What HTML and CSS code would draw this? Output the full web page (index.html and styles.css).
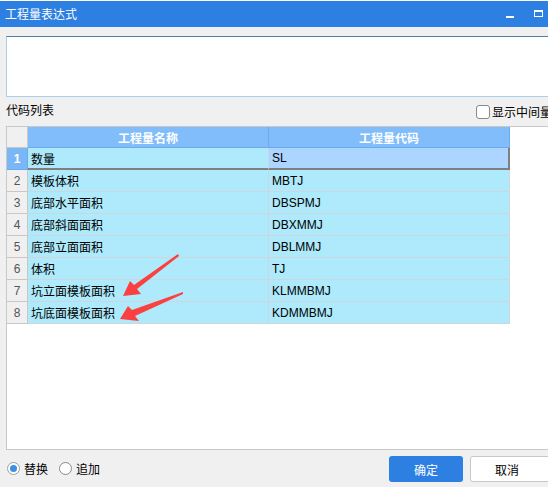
FILE: index.html
```html
<!DOCTYPE html>
<html lang="zh">
<head>
<meta charset="utf-8">
<title>工程量表达式</title>
<link rel="stylesheet" href="styles.css">
</head>
<body>
<div class="page">
  <div class="topstrip"></div>
  <div class="titlebar">
    <span class="title">工程量表达式</span>
    <span class="winbtns"><span class="min"></span><span class="max"></span></span>
  </div>
  <div class="content">
    <div class="expr"></div>
    <div class="listhead">
      <span class="label">代码列表</span>
      <span class="chk"><span class="box"></span>显示中间量</span>
    </div>
    <div class="gridwrap">
      <div class="grid">
        <div class="c hn"></div><div class="c hd">工程量名称</div><div class="c hd">工程量代码</div>
        <div class="c n sel">1</div><div class="c d r1">数量</div><div class="c d r1 cur">SL</div>
        <div class="c n">2</div><div class="c d">模板体积</div><div class="c d">MBTJ</div>
        <div class="c n">3</div><div class="c d">底部水平面积</div><div class="c d">DBSPMJ</div>
        <div class="c n">4</div><div class="c d">底部斜面面积</div><div class="c d">DBXMMJ</div>
        <div class="c n">5</div><div class="c d">底部立面面积</div><div class="c d">DBLMMJ</div>
        <div class="c n">6</div><div class="c d">体积</div><div class="c d">TJ</div>
        <div class="c n">7</div><div class="c d">坑立面模板面积</div><div class="c d">KLMMBMJ</div>
        <div class="c n">8</div><div class="c d">坑底面模板面积</div><div class="c d">KDMMBMJ</div>
      </div>
    </div>
    <div class="footer">
      <span class="radio on"><span class="dot"></span></span><span class="rtext">替换</span>
      <span class="radio"></span><span class="rtext">追加</span>
      <span class="btns">
        <span class="btn primary">确定</span>
        <span class="btn cancel">取消</span>
      </span>
    </div>
  </div>
  <svg class="arrows" width="548" height="487" viewBox="0 0 548 487">
    <polygon points="123,296 130,281 134,285 178,254 179,256 137,289 141,294" fill="#fb4040"/>
    <polygon points="120,319 128,306 132,310 183,292 183,294 135,316 139,321" fill="#fb4040"/>
  </svg>
</div>
</body>
</html>
```
FILE: styles.css
```css
html, body {
  margin: 0;
  padding: 0;
  overflow: hidden;
  background: #f0f0f0;
}
body {
  font-family: "Liberation Sans", "Noto Sans CJK SC", sans-serif;
  font-size: 12px;
  color: #000;
}
.page {
  position: relative;
  width: 548px;
  height: 487px;
  overflow: hidden;
}
.topstrip {
  height: 1px;
  background: #ffffff;
}
.titlebar {
  height: 26px;
  background: #2d80e1;
  display: flex;
  align-items: center;
  padding-left: 5px;
  color: #fff;
  width: 548px;
  box-sizing: border-box;
}
.title {
  font-size: 12px;
  line-height: 26px;
  margin-top: 1px;
}
.winbtns {
  margin-left: auto;
  display: flex;
  align-items: center;
  height: 26px;
}
.min {
  width: 8px;
  height: 2px;
  background: #fff;
  margin-top: 5px;
  margin-right: 20px;
}
.max {
  width: 9px;
  height: 7px;
  box-sizing: border-box;
  border: 1px solid #fff;
  border-top-width: 2px;
  margin-top: -2px;
  margin-right: 5px;
}
.content {
  width: 548px;
  padding-left: 6px;
}
.expr {
  margin-top: 9px;
  height: 61px;
  box-sizing: border-box;
  background: #fff;
  border: 1px solid #a9d0ec;
  border-top-color: #4f7fab;
  border-right: none;
}
.listhead {
  height: 29px;
  display: flex;
  align-items: center;
}
.label {
  line-height: 29px;
}
.chk {
  margin-left: auto;
  width: 78px;
  white-space: nowrap;
  display: flex;
  align-items: center;
  gap: 2px;
}
.box {
  width: 14px;
  height: 14px;
  box-sizing: border-box;
  border: 1px solid #8a8a8a;
  border-radius: 3px;
  background: #fff;
}
.gridwrap {
  height: 324px;
  box-sizing: border-box;
  border: 1px solid #c8c8c8;
  border-right: none;
  background: #fff;
}
.grid {
  display: grid;
  grid-template-columns: 21px 241px 241px;
  grid-auto-rows: 22px;
  grid-template-rows: 21px;
}
.c {
  box-sizing: border-box;
  border-right: 1px solid #cdd6da;
  border-bottom: 1px solid #cdd6da;
  display: flex;
  align-items: center;
  white-space: nowrap;
  overflow: hidden;
}
.hn {
  background: #f0f0f0;
  border-color: #c8c8c8;
}
.hd {
  background: #80bdfa;
  border-color: #6aaaef;
  color: #fff;
  font-weight: bold;
  justify-content: center;
}
.n {
  background: #f0f0f0;
  border-color: #c8c8c8;
  color: #555;
  justify-content: center;
}
.n.sel {
  background: #79b7f6;
  border-color: #6aaaef;
  color: #fff;
  font-weight: bold;
}
.d {
  background: #aeeafb;
  padding-left: 3px;
}
.r1 {
  border-bottom: 2px solid #7f7f7f;
}
.cur {
  background: #acd5ff;
  border-right: 2px solid #7f7f7f;
}
.footer {
  height: 37px;
  display: flex;
  align-items: center;
  padding-left: 1px;
}
.radio {
  width: 13px;
  height: 13px;
  box-sizing: border-box;
  border: 1px solid #8a8a8a;
  border-radius: 50%;
  background: #fff;
  display: flex;
  align-items: center;
  justify-content: center;
}
.radio.on {
  border-color: #a0a0a0;
}
.dot {
  width: 7px;
  height: 7px;
  border-radius: 50%;
  background: #3d8ee8;
}
.rtext {
  margin-left: 4px;
  margin-right: 11px;
}
.btns {
  margin-left: auto;
  display: flex;
  gap: 7px;
  margin-top: 1px;
}
.btn {
  height: 26px;
  box-sizing: border-box;
  border-radius: 3px;
  display: flex;
  align-items: center;
}
.primary {
  width: 74px;
  background: #2d80e1;
  color: #fff;
  justify-content: center;
}
.cancel {
  width: 84px;
  background: #fff;
  border: 1px solid #c8c8c8;
  padding-left: 24px;
}
.arrows {
  position: absolute;
  left: 0;
  top: 0;
  pointer-events: none;
}
```
